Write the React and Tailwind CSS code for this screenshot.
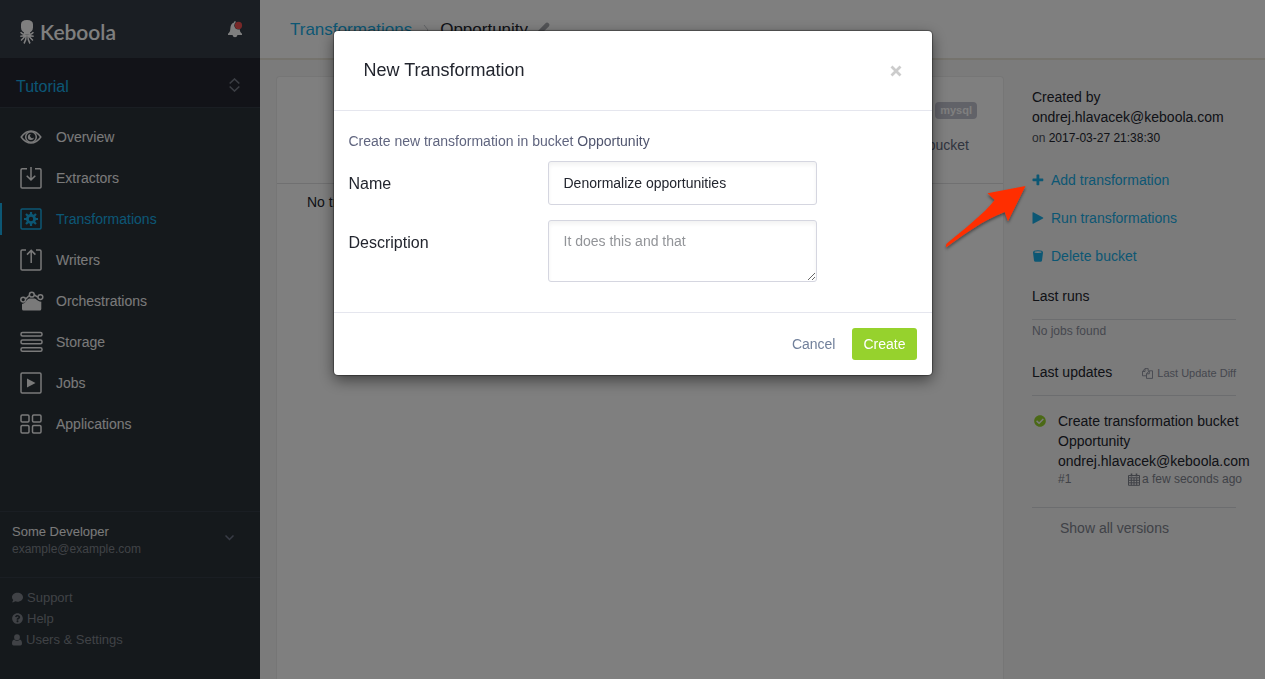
import React from "react";
import { FaComment, FaQuestionCircle, FaCheckCircle } from "react-icons/fa";

const strokeProps = { fill: "none", stroke: "currentColor", strokeWidth: 1.5 };

function EyeIcon() {
  return (
    <svg width="22" height="22" viewBox="0 0 22 22" {...strokeProps} aria-hidden="true">
      <path d="M1.2 11C4 7 7.300 4.900 11 4.900S18 7 20.800 11C18 15 14.700 17.100 11 17.100S4 15 1.200 11Z" />
      <circle cx="11" cy="11" r="5.300" />
      <path d="M10.800 7.900a3.100 3.100 0 1 0 3.200 3.600a2.200 2.200 0 0 1-3.200-3.600Z" fill="currentColor" stroke="none" />
    </svg>
  );
}

function ExtractIcon() {
  return (
    <svg width="22" height="22" viewBox="0 0 22 22" {...strokeProps} aria-hidden="true">
      <path d="M7 1.700H2.200Q1 1.700 1 2.900V20Q1 21 2.200 21H19.800Q21 21 21 20V2.900Q21 1.700 19.800 1.700H15" />
      <path d="M11 0V12.500M6.700 8.700L11 12.900L15.300 8.700" />
    </svg>
  );
}

function GearIcon() {
  return (
    <svg width="22" height="22" viewBox="0 0 22 22" {...strokeProps} aria-hidden="true">
      <rect x="1" y="1" width="20" height="20" rx="1.200" />
      <circle cx="11" cy="11" r="3.600" strokeWidth="2.800" />
      <path d="M11 4V7M11 15V18M4 11H7M15 11H18M6 6L8.300 8.300M13.700 13.700L16 16M16 6L13.700 8.300M8.300 13.700L6 16" strokeWidth="2.200" />
    </svg>
  );
}

function WriteIcon() {
  return (
    <svg width="22" height="22" viewBox="0 0 22 22" {...strokeProps} aria-hidden="true">
      <path d="M6 1H2.200Q1 1 1 2.200V20Q1 21 2.200 21H19.800Q21 21 21 20V2.200Q21 1 19.800 1H16" />
      <path d="M11.200 14V1.500M7 5.600L11.200 1.400L15.400 5.600" />
    </svg>
  );
}

function OrchestrationIcon() {
  return (
    <svg width="24" height="22" viewBox="0 0 24 22" {...strokeProps} aria-hidden="true">
      <circle cx="3.200" cy="9.600" r="2.400" />
      <circle cx="11.800" cy="4.700" r="2.400" />
      <circle cx="20.400" cy="7.100" r="2.400" />
      <path d="M5.300 8.800C7.500 8.400 7.800 6 9.600 5.400M14.100 5.100C15.800 5.300 16.400 6.800 18 7" />
      <path d="M2 14C6 13.600 7 8.600 9.500 8.600H14.500C16.500 8.600 17 11.500 21.300 11.700V19Q21.300 20.600 19.700 20.600H3.600Q2 20.600 2 19Z" fill="currentColor" stroke="none" />
    </svg>
  );
}

function StorageIcon() {
  return (
    <svg width="23" height="22" viewBox="0 0 23 22" {...strokeProps} aria-hidden="true">
      <rect x="1" y="1.500" width="21" height="3.600" rx="1.500" />
      <rect x="1" y="9.100" width="21" height="3.600" rx="1.500" />
      <rect x="1" y="16.700" width="21" height="3.600" rx="1.500" />
    </svg>
  );
}

function JobsIcon() {
  return (
    <svg width="22" height="22" viewBox="0 0 22 22" {...strokeProps} aria-hidden="true">
      <rect x="1" y="1" width="20" height="20" rx="1.200" />
      <path d="M7 6.500L15.500 11L7 15.500Z" fill="currentColor" stroke="none" />
    </svg>
  );
}

function AppsIcon() {
  return (
    <svg width="22" height="22" viewBox="0 0 22 22" {...strokeProps} aria-hidden="true">
      <rect x="1" y="2" width="8" height="7" rx="1.200" />
      <rect x="12.500" y="2" width="8.500" height="7" rx="1.200" />
      <rect x="1" y="12.500" width="8" height="7.500" rx="1.200" />
      <rect x="12.500" y="12.500" width="8.500" height="7.500" rx="1.200" />
    </svg>
  );
}

function Logo() {
  return (
    <svg width="14" height="24" viewBox="0 0 14 24" aria-hidden="true">
      <path d="M1 4.500Q1 0 7 0T13 4.500V7.500Q13 10 11.300 11.600L10 12.600V14.500H4V12.600L2.700 11.600Q1 10 1 7.500Z" fill="currentColor" />
      <path d="M4.500 14.500Q2.200 14.300 .500 12.300M9.500 14.500Q11.800 14.300 13.500 12.300M5 14.800Q3 16.300 .300 16.300M9 14.800Q11 16.300 13.700 16.300M5.500 14.500Q4.500 18 1 20.500M8.500 14.500Q9.500 18 13 20.500M6.300 14.500Q6.300 20 4 23.500M7.700 14.500Q7.700 20 10 23.500" fill="none" stroke="currentColor" strokeWidth="1.500" />
    </svg>
  );
}

function BellIcon() {
  return (
    <svg width="16" height="18" viewBox="0 0 16 18" aria-hidden="true">
      <path d="M7 1Q7 .300 8 .300T9 1V1.500Q12.300 2.500 12.600 7C12.800 10.500 13.500 11.500 15 12.700V14H1V12.700C2.500 11.500 3.200 10.500 3.400 7Q3.700 2.500 7 1.500ZM5.500 14H10.500Q10 16.300 8 16.300T5.500 14Z" fill="#ffffff" />
      <circle cx="11.500" cy="4.400" r="4.200" fill="#343c46" />
      <circle cx="11.500" cy="4.400" r="3.600" fill="#f05050" />
    </svg>
  );
}

function UserIcon() {
  return (
    <svg width="10" height="12" viewBox="0 0 10 12" aria-hidden="true">
      <path d="M5 .300A2.900 2.900 0 0 1 5 6.100A2.900 2.900 0 0 1 5 .300ZM2.200 5.600Q3.300 6.800 5 6.800T7.800 5.600Q10 6 10 9.600Q10 11.600 8.400 11.600H1.600Q0 11.600 0 9.600Q0 6 2.200 5.600Z" fill="currentColor" />
    </svg>
  );
}

function PlusIcon() {
  return (
    <svg width="12" height="12" viewBox="0 0 12 12" aria-hidden="true">
      <path d="M4.500 1.100Q4.500 .500 5.100 .500H6.700Q7.300 .500 7.300 1.100V4.400H10.700Q11.300 4.400 11.300 5V6.600Q11.300 7.200 10.700 7.200H7.300V10.600Q7.300 11.200 6.700 11.200H5.100Q4.500 11.200 4.500 10.600V7.200H1.100Q.500 7.200 .500 6.600V5Q.500 4.400 1.100 4.400H4.500Z" fill="currentColor" />
    </svg>
  );
}

function PlayIcon() {
  return (
    <svg width="12" height="12" viewBox="0 0 12 12" aria-hidden="true">
      <path d="M.500 .700Q.500 -.100 1.200 .300L11 5.600Q11.500 6 11 6.400L1.200 11.700Q.500 12.100 .500 11.300Z" fill="currentColor" />
    </svg>
  );
}

function CopyIcon() {
  return (
    <svg width="11" height="11" viewBox="0 0 11 11" fill="none" stroke="currentColor" strokeWidth="0.900" aria-hidden="true">
      <path d="M4.500 7.800H.500V3.500L3 .600H6.200V3M3 .600V3.500H.500" />
      <path d="M7.300 2.800H10.500V10.400H4.500V5.800L7.300 2.800V5.800H4.500" />
    </svg>
  );
}

function CalendarIcon() {
  return (
    <svg width="12" height="13" viewBox="0 0 12 13" fill="none" stroke="currentColor" strokeWidth="1" aria-hidden="true">
      <path d="M.500 2.500H11.500V12.300H.500ZM.500 4.800H11.500M.500 7.300H11.500M.500 9.800H11.500M3.300 4.800V12.300M6 4.800V12.300M8.700 4.800V12.300" />
      <path d="M3.500 .500V3.500M8.500 .500V3.500" strokeWidth="1.600" />
    </svg>
  );
}

function CupIcon() {
  return (
    <svg width="12" height="12" viewBox="0 0 12 12" aria-hidden="true">
      <path d="M1 2.500L2 10.500Q2.200 11.700 3.500 11.700H8.500Q9.800 11.700 10 10.500L11 2.500Q11 .300 6 .300T1 2.500ZM2.300 2.300Q2.500 1.300 6 1.300T9.700 2.300Q9.500 3.100 6 3.100T2.300 2.300Z" fill="currentColor" fillRule="evenodd" />
    </svg>
  );
}

function PencilIcon() {
  return (
    <svg width="14" height="14" viewBox="0 0 14 14" aria-hidden="true">
      <path d="M0 14L1 10L9.500 1.200Q11 -.300 12.600 1.200T12.800 4.400L4 13Z" fill="currentColor" />
    </svg>
  );
}

const navItems = [
  { label: "Overview", Icon: EyeIcon },
  { label: "Extractors", Icon: ExtractIcon },
  { label: "Transformations", Icon: GearIcon, active: true },
  { label: "Writers", Icon: WriteIcon },
  { label: "Orchestrations", Icon: OrchestrationIcon },
  { label: "Storage", Icon: StorageIcon },
  { label: "Jobs", Icon: JobsIcon },
  { label: "Applications", Icon: AppsIcon },
];

const helpLinks = [
  { label: "Support", Icon: FaComment },
  { label: "Help", Icon: FaQuestionCircle },
  { label: "Users & Settings", Icon: UserIcon },
];

function Sidebar() {
  return (
    <aside className="flex w-[260px] shrink-0 flex-col bg-[#2a3239]">
      <div className="flex h-[58px] items-center justify-between bg-[#343c46] pt-1.5 pr-[17px] pl-5 text-white">
        <a href="#home" className="flex items-center gap-1.5">
          <Logo />
          <span className="font-[Lato,sans-serif] text-[21px] leading-6 font-semibold">Keboola</span>
        </a>
        <button type="button" aria-label="Notifications" className="pb-1">
          <BellIcon />
        </button>
      </div>
      <button type="button" className="flex h-[50px] items-center justify-between border-b border-[#343c46] bg-[#242630] pt-2 pr-5 pl-4 text-base text-[#18aee8]">
        Tutorial
        <svg width="11" height="14" viewBox="0 0 11 14" fill="none" stroke="#777c88" strokeWidth="1.600" className="mb-1" aria-hidden="true">
          <path d="M.700 5.500L5.500 1L10.300 5.500M.700 8.500L5.500 13L10.300 8.500" />
        </svg>
      </button>
      <nav className="pt-2">
        {navItems.map(({ label, Icon, active }) => (
          <a
            key={label}
            href={"#" + label.toLowerCase()}
            className={
              "flex h-[41px] items-center " + (active ? "text-[#18aee8]" : "text-[#f4f4f4]")
            }
          >
            <span className={"h-8 w-0.5 " + (active ? "bg-[#18aee8]" : "")} />
            <span className="ml-[18px] w-9"><Icon /></span>
            {label}
          </a>
        ))}
      </nav>
      <div className="mt-auto flex h-[66px] items-start justify-between border-t border-[#343c46] pt-[11px] pr-[26px] pl-3 text-[13px] leading-[17px]">
        <div>
          <div className="text-[#f4f4f4]">Some Developer</div>
          <div className="text-xs leading-[18px] text-[#80858c]">example@example.com</div>
        </div>
        <button type="button" aria-label="Account menu" className="pt-3">
          <svg width="9" height="6" viewBox="0 0 9 6" fill="none" stroke="#70778a" strokeWidth="1.500" aria-hidden="true">
            <path d="M.500 .500L4.500 4.500L8.500 .500" />
          </svg>
        </button>
      </div>
      <ul className="h-[102px] border-t border-[#343c46] pt-[9px] pl-3 text-[13px] leading-[21px] text-[#80858c]">
        {helpLinks.map(({ label, Icon }) => (
          <li key={label}>
            <a href={"#" + label.split(" ")[0].toLowerCase()} className="flex items-center gap-1">
              <Icon size={11} aria-hidden="true" />
              {label}
            </a>
          </li>
        ))}
      </ul>
    </aside>
  );
}

const actions = [
  { label: "Add transformation", Icon: PlusIcon },
  { label: "Run transformations", Icon: PlayIcon },
  { label: "Delete bucket", Icon: CupIcon },
];

function Details() {
  return (
    <aside className="w-[261px] shrink-0 pt-[27px] pr-[29px] pl-7 leading-5 text-[#22252e]">
      <div>Created by</div>
      <div>ondrej.hlavacek@keboola.com</div>
      <div className="text-xs leading-[22px]">
        <span className="text-[#50545e]">on</span> 2017-03-27 21:38:30
      </div>
      <ul className="flex flex-col gap-[18px] pt-[21px] text-[#18aee8]">
        {actions.map(({ label, Icon }) => (
          <li key={label}>
            <button type="button" className="flex items-center gap-[7px]">
              <span className="w-3"><Icon /></span>
              {label}
            </button>
          </li>
        ))}
      </ul>
      <h2 className="mt-5 border-b border-[#d8dade] pb-[13px]">Last runs</h2>
      <div className="text-xs leading-[22px] text-[#8c909e]">No jobs found</div>
      <div className="mt-5 flex items-center justify-between border-b border-[#d8dade] pb-[13px]">
        <h2>Last updates</h2>
        <button type="button" className="flex items-center gap-1 pt-0.5 text-[11px] leading-[18px] text-[#8c909e]">
          <CopyIcon />
          Last Update Diff
        </button>
      </div>
      <div className="flex border-b border-[#d8dade] pt-[15px] pb-5">
        <FaCheckCircle size={12} className="mt-1 mr-3 ml-0.5 shrink-0 text-[#96d22d]" aria-hidden="true" />
        <div className="-mr-1.5 min-w-0 flex-1">
          <div>
            Create transformation bucket Opportunity
          </div>
          <div className="whitespace-nowrap">ondrej.hlavacek@keboola.com</div>
          <div className="flex justify-between text-xs leading-4 text-[#80848f]">
            <span>#1</span>
            <span className="flex items-center gap-0.5">
              <CalendarIcon />a few seconds ago
            </span>
          </div>
        </div>
      </div>
      <a href="#versions" className="block pt-2.5 pl-7 text-[#80848f]">Show all versions</a>
    </aside>
  );
}

function Page() {
  return (
    <div className="flex min-h-screen">
      <Sidebar />
      <main className="flex min-w-0 flex-1 flex-col bg-[#f6f6f6]">
        <header className="flex h-[60px] items-center border-b-2 border-[#ebe6da] bg-white pt-0.5 pl-[30px] text-[17px]">
          <a href="#transformations" className="text-[#18aee8]">Transformations</a>
          <svg className="mx-[11px]" width="6" height="10" viewBox="0 0 6 10" fill="none" stroke="#c4c6cc" aria-hidden="true">
            <path d="M1 0L5 5L1 10" />
          </svg>
          <h1 className="text-[#22252e]">Opportunity</h1>
          <button type="button" aria-label="Edit name" className="ml-2 pb-0.5 text-[#a6a8ae]">
            <PencilIcon />
          </button>
        </header>
        <div className="flex flex-1">
          <section className="mt-4 ml-4 flex-1 rounded-t border border-b-0 border-[#ececec] bg-white">
            <div className="flex h-[107px] flex-col items-end border-b border-[#e0e0e2] pt-[25px] pr-[26px]">
              <span className="rounded-sm bg-[#c3c4d0] px-[5px] text-[11px] leading-[17px] font-bold text-white">mysql</span>
              <button type="button" className="mt-4 pr-2 text-[#626a80]">Delete bucket</button>
            </div>
            <p className="pt-2 pl-[30px] text-[#22252e]">No transformations found</p>
          </section>
          <Details />
        </div>
      </main>
    </div>
  );
}

function Modal() {
  return (
    <div className="fixed inset-0 bg-black/50">
      <form
        role="dialog"
        aria-labelledby="dialog-title"
        onSubmit={(e) => e.preventDefault()}
        className="mx-auto mt-[31px] w-[598px] max-w-full rounded bg-white shadow-[0_0_1px_1px_rgba(0,0,0,0.35),0_5px_15px_rgba(0,0,0,0.5)]"
      >
        <div className="flex h-20 items-center justify-between border-b border-[#e5e6ee] px-[30px]">
          <h2 id="dialog-title" className="pb-0.5 text-lg text-[#22252e]">New Transformation</h2>
          <button type="button" aria-label="Close">
            <svg width="12" height="12" viewBox="0 0 12 12" stroke="#cccccc" strokeWidth="2.800" aria-hidden="true">
              <path d="M1.500 1.500L10.500 10.500M10.500 1.500L1.500 10.500" />
            </svg>
          </button>
        </div>
        <div className="px-[15px] pt-5 pb-[30px]">
          <p className="leading-5 text-[#60657f]">
            Create new transformation in bucket <strong className="font-normal text-[#50556e]">Opportunity</strong>
          </p>
          <div className="mt-2.5 grid grid-cols-[199px_1fr] gap-y-[15px] pr-[100px] text-[#22252e]">
            <label htmlFor="name" className="pt-[11px] text-base">Name</label>
            <input
              id="name"
              defaultValue="Denormalize opportunities"
              className="h-11 w-full min-w-0 rounded-[3px] border border-[#d5d6e0] px-[15px] text-sm shadow-[inset_0_3px_4px_rgba(0,0,0,0.05)] outline-none"
            />
            <label htmlFor="description" className="pt-[11px] text-base">Description</label>
            <textarea
              id="description"
              placeholder="It does this and that"
              className="block h-[62px] w-full min-w-0 resize rounded-[3px] border border-[#d5d6e0] px-[15px] py-2.5 text-sm shadow-[inset_0_3px_4px_rgba(0,0,0,0.05)] outline-none placeholder:text-[#929498]"
            />
          </div>
        </div>
        <div className="flex items-center justify-end gap-[17px] border-t border-[#e5e6ee] px-[15px] py-[15px]">
          <button type="button" className="text-[#71809b]">Cancel</button>
          <button type="submit" className="h-8 rounded-[3px] bg-[#96d22d] px-[11px] text-white">Create</button>
        </div>
      </form>
    </div>
  );
}

function PointerArrow() {
  return (
    <svg className="pointer-events-none absolute top-[180px] left-[940px]" width="92" height="76" viewBox="0 0 92 76" aria-hidden="true">
      <defs>
        <filter id="arrow-shadow" x="-10%" y="-10%" width="125%" height="130%">
          <feDropShadow dx="0" dy="2" stdDeviation="1.500" floodColor="#000" floodOpacity="0.450" />
        </filter>
      </defs>
      <path d="M85.500 6L47.500 13.200L54.700 20C44 34 24 49 6.500 63.800Q5.400 65.500 6.300 67.300C26 53 42 41 64.700 32L68 41.300Z" fill="#ff2f05" filter="url(#arrow-shadow)" />
    </svg>
  );
}

export default function App() {
  return (
    <div className="relative font-['Liberation_Sans',Arial,sans-serif] text-sm">
      <Page />
      <Modal />
      <PointerArrow />
    </div>
  );
}
